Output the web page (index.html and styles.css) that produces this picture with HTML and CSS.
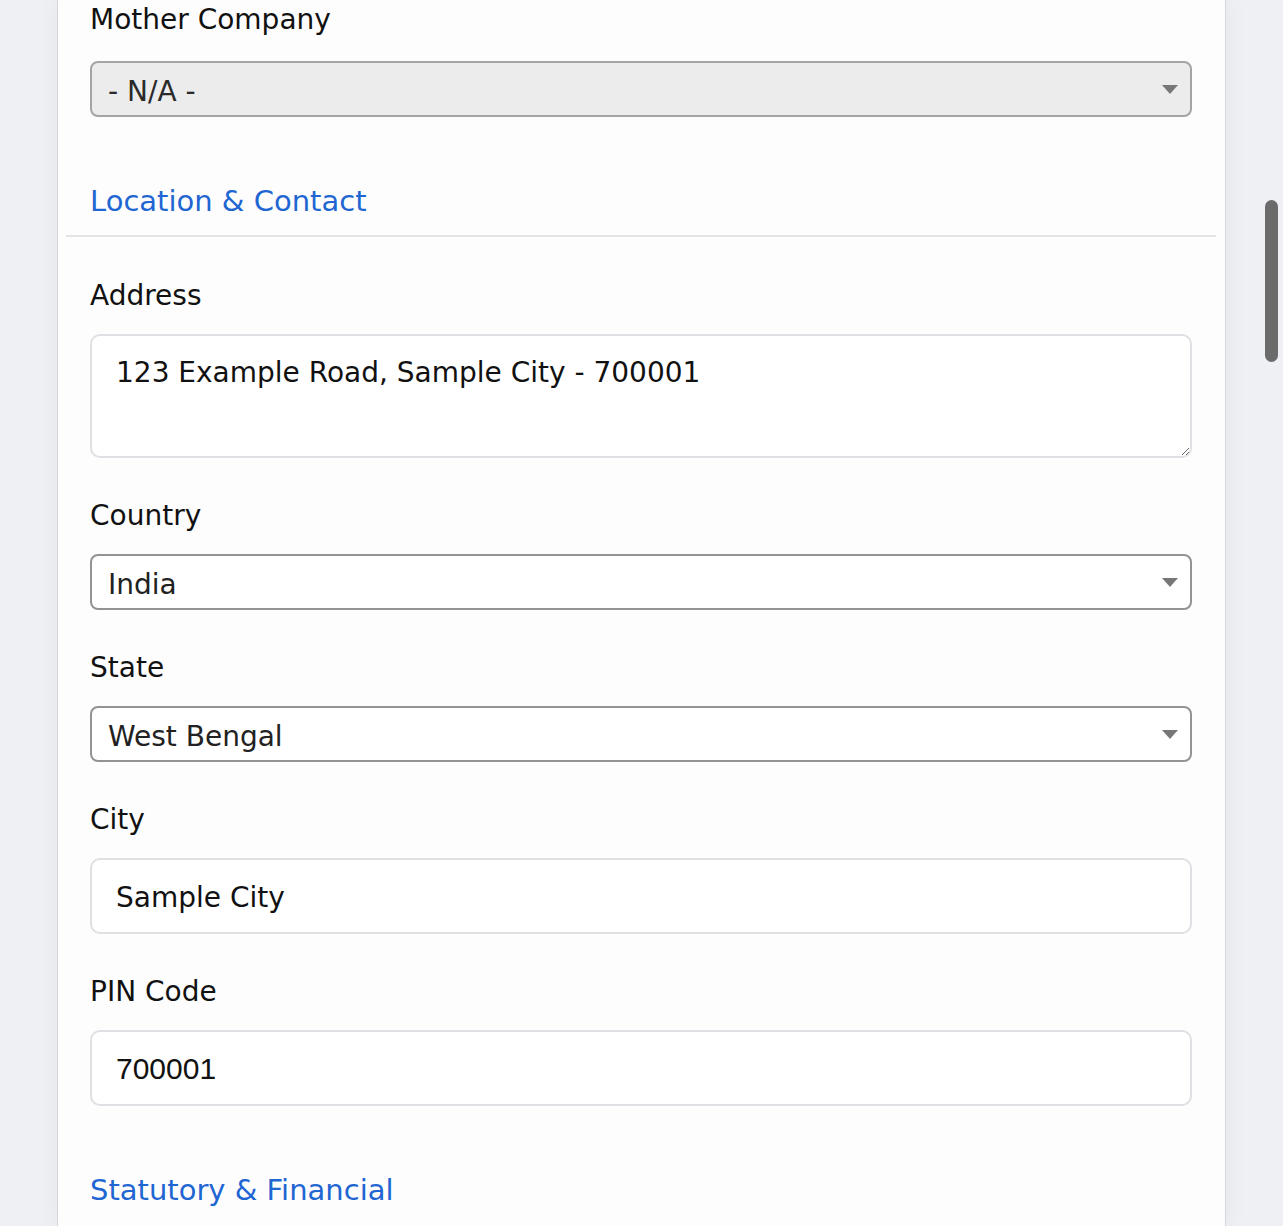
FILE: index.html
```html
<!DOCTYPE html>
<html lang="en">

<head>
    <meta charset="UTF-8">
    <meta name="viewport" content="width=device-width, initial-scale=1.0">
    <title>Company Profile</title>
    <link rel="stylesheet" href="styles.css">
</head>

<body>
    <div class="page">
        <div class="card">
            <div class="field">
                <label for="mother">Mother Company</label>
                <div class="select-wrap">
                    <select id="mother" class="select disabled" disabled>
                        <option>- N/A -</option>
                    </select>
                </div>
            </div>

            <h3 class="section-title">Location &amp; Contact</h3>

            <div class="field">
                <label for="address">Address</label>
                <textarea id="address" class="textarea">123 Example Road, Sample City - 700001</textarea>
            </div>

            <div class="field">
                <label for="country">Country</label>
                <div class="select-wrap">
                    <select id="country" class="select">
                        <option>India</option>
                    </select>
                </div>
            </div>

            <div class="field">
                <label for="state">State</label>
                <div class="select-wrap">
                    <select id="state" class="select">
                        <option>West Bengal</option>
                    </select>
                </div>
            </div>

            <div class="field">
                <label for="city">City</label>
                <input type="text" id="city" class="input" value="Sample City">
            </div>

            <div class="field">
                <label for="pin">PIN Code</label>
                <input type="number" id="pin" class="input number" value="700001">
            </div>

            <h3 class="section-title last">Statutory &amp; Financial</h3>
        </div>
    </div>

    <div class="scroll-thumb"></div>
</body>

</html>
```

FILE: styles.css
```css
html, body {
    margin: 0;
    padding: 0;
    height: 100%;
    overflow: hidden;
}

body {
    background-color: #eef0f4;
    font-family: "DejaVu Sans", sans-serif;
    color: #111;
}

.page {
    padding: 0 57px 0 57px;
}

.card {
    background-color: #fdfdfd;
    border-left: 1px solid #d6d7da;
    border-right: 1px solid #d6d7da;
    box-shadow: 0 0 24px rgba(0, 0, 0, 0.05);
    padding: 0 33px 0 32px;
    min-height: 1226px;
    box-sizing: border-box;
}

.field {
    margin-bottom: 41px;
}

.field label {
    display: block;
    font-size: 28px;
    line-height: 34px;
    margin-bottom: 21px;
}

.field:first-child label {
    padding-top: 3px;
    margin-bottom: 24px;
}

.select-wrap {
    position: relative;
}

.select-wrap::after {
    content: "";
    position: absolute;
    right: 14px;
    top: 24px;
    border-left: 8px solid transparent;
    border-right: 8px solid transparent;
    border-top: 9px solid #777;
    pointer-events: none;
}

.select {
    appearance: none;
    -webkit-appearance: none;
    width: 100%;
    height: 56px;
    box-sizing: border-box;
    border: 2px solid #939393;
    border-radius: 8px;
    background-color: #fff;
    padding: 4px 16px 0;
    font-family: inherit;
    font-size: 28px;
    color: #222;
    opacity: 1;
}

.select.disabled {
    background-color: #ececec;
    border-color: #a4a4a4;
    color: #2a2a2a;
}

.input,
.textarea {
    display: block;
    width: 100%;
    box-sizing: border-box;
    border: 2px solid #dfe0e3;
    border-radius: 10px;
    background-color: #fff;
    font-family: inherit;
    font-size: 28px;
    color: #111;
}

.input {
    height: 76px;
    padding: 2px 24px 0;
}

.input.number {
    font-family: "Liberation Sans", Arial, sans-serif;
    font-size: 30px;
}

.textarea {
    height: 124px;
    padding: 18px 24px;
    resize: vertical;
    line-height: 38px;
}

.section-title {
    margin: 0 -24px 42px;
    padding: 25px 24px 16px;
    font-size: 29px;
    line-height: 36px;
    font-weight: normal;
    color: #1f66d2;
    border-bottom: 2px solid #e3e4e6;
}

.section-title.last {
    border-bottom: none;
}

.scroll-thumb {
    position: fixed;
    right: 5px;
    top: 200px;
    width: 13px;
    height: 162px;
    border-radius: 7px;
    background-color: #6b6b6b;
}
```
